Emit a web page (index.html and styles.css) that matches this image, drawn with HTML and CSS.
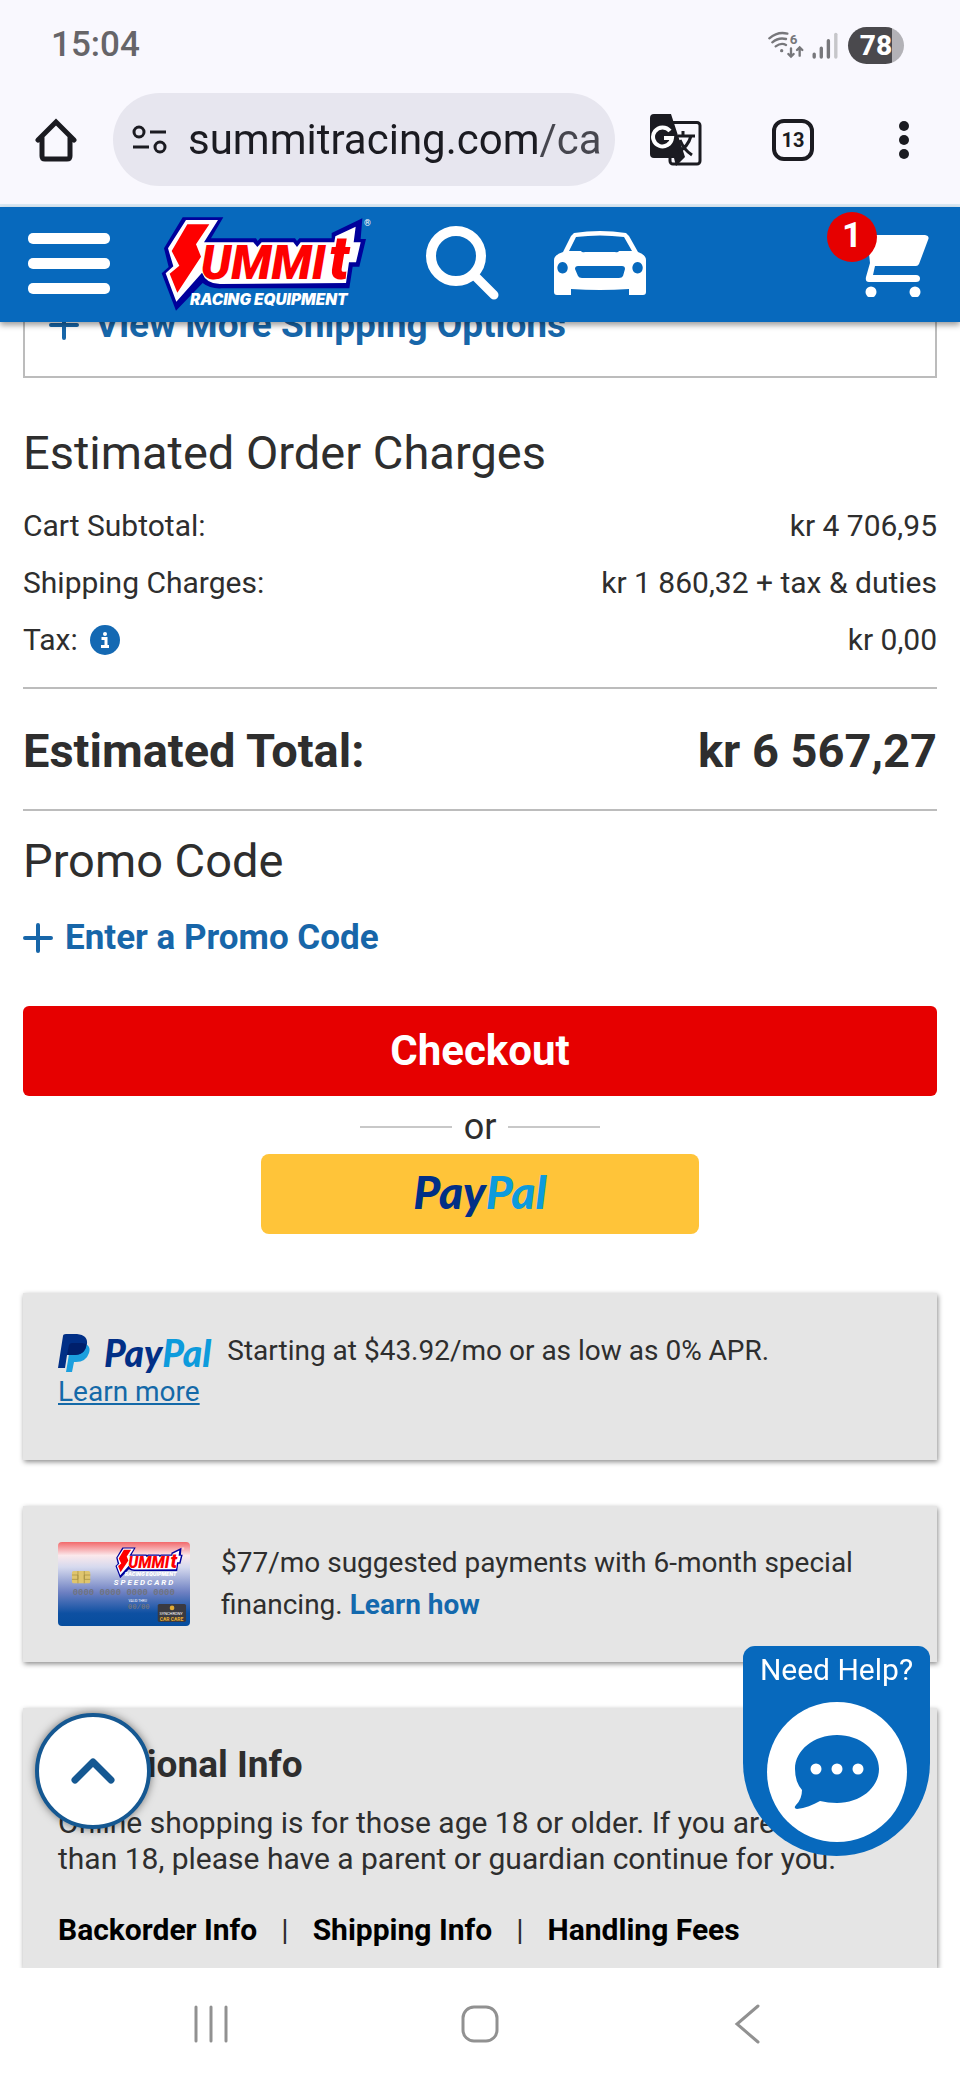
FILE: index.html
```html
<!DOCTYPE html>
<html lang="en">
<head>
<meta charset="utf-8">
<meta name="viewport" content="width=device-width, initial-scale=1">
<title>Summit Racing Equipment - Cart</title>
<link rel="stylesheet" href="styles.css">
</head>
<body>
<svg class="defs" aria-hidden="true">
  <symbol id="summit-logo" viewBox="30 30 636 291">
    <path class="logo-navy" d="M98 37H220L183 100H318L323 108 330 100H435L441 108 448 100H545V84L637 40 632 102H648L628 185H608L598 250H215Q180 252 158 234L78 317 35 205 56 186 42 130Z"/>
    <path class="logo-white" d="M108 45H204L162 112H310L322 126 335 112H430L441 126 452 112H553L556 94 617 65 611 112H632L618 172H597L588 234 210 237Q168 236 156 203L79 290 47 205 70 184 54 130Z"/>
    <path class="logo-red" d="M112 58H178L138 118 153 155 82 263 59 206 88 182 65 138Z"/>
    <text class="logo-word" x="152" y="222">UMMI<tspan class="logo-tall" x="537">t</tspan></text>
    <text class="logo-sub" x="120" y="300">RACING EQUIPMENT</text>
    <text class="logo-reg" x="642" y="62">®</text>
  </symbol>
</svg>

<div class="device-top">
  <div class="status-bar">
    <time class="clock">15:04</time>
    <div class="status-icons">
      <svg class="wifi" viewBox="0 0 108 84" aria-label="Wi-Fi 6">
        <g fill="none" stroke="#77777b" stroke-width="7" stroke-linecap="round">
          <path d="M4 22Q30 0 58 8M13 34Q32 18 54 24M23 46Q40 34 54 42"/>
          <path d="M69 52V76M61 69 69 77 77 69M95 74V50M87 57 95 49 103 57"/>
        </g>
        <circle cx="41" cy="59" r="5" fill="#77777b"/>
        <text x="65" y="38" class="wifi-gen">6</text>
      </svg>
      <svg class="signal" viewBox="0 0 76 80" aria-label="Signal">
        <path d="M6 66V74M27 48V74M48 26V74" stroke="#77777b" stroke-width="10" stroke-linecap="round"/>
        <path d="M70 7V74" stroke="#c6c6ca" stroke-width="10" stroke-linecap="round"/>
      </svg>
      <span class="battery">78</span>
    </div>
  </div>
  <div class="toolbar">
    <button class="icon-btn" type="button" aria-label="Home">
      <svg class="home" viewBox="0 0 42 44"><path d="M3 22 21 4 39 22M7 19V38Q7 41 10 41H32Q35 41 35 38V19" fill="none" stroke="#1b1b21" stroke-width="5" stroke-linecap="round" stroke-linejoin="miter"/></svg>
    </button>
    <div class="address">
      <svg class="tune" viewBox="0 0 36 30" aria-hidden="true">
        <g fill="none" stroke="#1b1b21" stroke-width="3"><circle cx="7" cy="7" r="5"/><circle cx="28" cy="22" r="5"/><path d="M18 7H34M1 22H17"/></g>
      </svg>
      <input class="url" type="text" aria-label="Address" value="summitracing.com/ca">
    </div>
    <button class="icon-btn translate-btn" type="button" aria-label="Translate">
      <svg class="translate" viewBox="0 0 52 52">
        <rect x="20" y="8.500" width="30" height="41.500" rx="3" fill="#f9f8fe" stroke="#1b1b21" stroke-width="3"/>
        <path d="M4 0H21L35 43 26 52 24 44H4Q0 44 0 40V4Q0 0 4 0Z" fill="#1b1b21"/>
        <path d="M28 22H45M33 17V22M41 22Q38 33 28 38M30 26Q34 36 42 41" fill="none" stroke="#1b1b21" stroke-width="3"/>
        <path d="M20 17A9.500 9.500 0 1 0 22 24H14" fill="none" stroke="#fff" stroke-width="4"/>
      </svg>
    </button>
    <button class="tabs" type="button" aria-label="13 open tabs">13</button>
    <button class="icon-btn dots-btn" type="button" aria-label="More">
      <svg class="dots" viewBox="0 0 10 38"><g fill="#1b1b21"><circle cx="5" cy="5" r="5"/><circle cx="5" cy="19" r="5"/><circle cx="5" cy="33" r="5"/></g></svg>
    </button>
  </div>
</div>

<header class="site-header">
  <button class="burger" type="button" aria-label="Menu"><span></span><span></span><span></span></button>
  <a class="logo-link" href="#" aria-label="Summit Racing Equipment"><svg class="logo"><use href="#summit-logo"/></svg></a>
  <button class="icon-btn search-btn" type="button" aria-label="Search">
    <svg class="search" viewBox="0 0 73 74"><ellipse cx="30" cy="30" rx="25" ry="25" fill="none" stroke="#fff" stroke-width="10"/><path d="M50 51 68 69" stroke="#fff" stroke-width="9" stroke-linecap="round"/></svg>
  </button>
  <button class="icon-btn car-btn" type="button" aria-label="Vehicle">
    <svg class="car" viewBox="0 0 92 64">
      <path fill="#fff" fill-rule="evenodd" d="M20 2Q46-2 72 2L75 5 84 21Q92 24 92 29V61Q92 64 89 64H75V58Q46 60 17 58V64H3Q0 64 0 61V29Q0 24 9 21L17 5ZM22 6 15 20H27Q28 22 31 21H61Q64 22 65 20H78L70 6Q46 3 22 6ZM24 35Q21 35 21 38L24 45Q25 47 28 47H65Q68 47 69 45L71 38Q71 35 68 35ZM8.500 31A5.200 5.800 0 1 0 8.600 31ZM83.500 31A5.200 5.800 0 1 0 83.600 31Z"/>
    </svg>
  </button>
  <a class="cart-link" href="#" aria-label="Cart, 1 item">
    <svg class="cart" viewBox="0 0 64 62"><path fill="#fff" d="M2 0H60Q65 1 63 5L54 29Q53 31 51 31H10L8 40H51Q55 40 55 43.500T51 47H4Q0 47 1 42L5 28Z"/><circle cx="6" cy="57" r="5.500" fill="#fff"/><circle cx="50" cy="57" r="5.500" fill="#fff"/></svg>
    <span class="badge">1</span>
  </a>
</header>

<main class="content">
  <section class="shipping">
    <a class="plus-link shipping-link" href="#"><svg class="plus" viewBox="0 0 30 30"><path d="M15 2V28M2 15H28" /></svg>View More Shipping Options</a>
  </section>

  <section>
    <h2 class="heading charges-heading">Estimated Order Charges</h2>
    <dl class="charges">
      <div class="row"><dt>Cart Subtotal:</dt><dd>kr 4 706,95</dd></div>
      <div class="row"><dt>Shipping Charges:</dt><dd>kr 1 860,32 + tax &amp; duties</dd></div>
      <div class="row"><dt class="tax">Tax: <button class="icon-btn" type="button" aria-label="About tax"><svg class="info" viewBox="0 0 30 30"><circle cx="15" cy="15" r="15" fill="#1469b3"/><circle cx="15" cy="9" r="2" fill="#fff"/><path d="M11.500 13.500H16V21M11 21.500H19" fill="none" stroke="#fff" stroke-width="3"/></svg></button></dt><dd>kr 0,00</dd></div>
    </dl>
    <div class="total"><span>Estimated Total:</span><span>kr 6 567,27</span></div>
  </section>

  <section>
    <h2 class="heading promo-heading">Promo Code</h2>
    <a class="plus-link promo-link" href="#"><svg class="plus" viewBox="0 0 30 30"><path d="M15 2V28M2 15H28" /></svg>Enter a Promo Code</a>
  </section>

  <section class="pay">
    <button class="checkout" type="button">Checkout</button>
    <div class="or">or</div>
    <button class="paypal-btn" type="button" aria-label="PayPal"><span class="paypal-word">Pay<span>Pal</span></span></button>
  </section>

  <section class="card paypal-card">
    <p><span class="paypal-logo"><svg class="pp" viewBox="0 0 32 38" aria-hidden="true">
      <path fill="#1b9fde" d="M28 10Q33 13 31 19 28 28 18 28H16L14 38H8L12 14Z"/>
      <path fill="#012f86" d="M5 2Q5 0 8 0H19Q30 1 29 10 27 22 15 21H9L7 34H0Z"/>
      <path fill="#001f6b" d="M28 10 28 13Q25 22 15 21H9L11 11Q12 9 14 9H24Z"/>
    </svg><span class="paypal-word small">Pay<span>Pal</span></span></span>Starting at $43.92/mo or as low as 0% APR. <a class="learn-more" href="#">Learn more</a></p>
  </section>

  <section class="card finance-card">
    <svg class="speedcard" viewBox="0 0 397 252" role="img" aria-label="Summit Racing SpeedCard">
      <defs><linearGradient id="cardfade" x1="0" y1="0" x2="0" y2="1"><stop offset="0" stop-color="#f26a6c"/><stop offset=".16" stop-color="#fbe9ec"/><stop offset=".3" stop-color="#d5d9ee"/><stop offset=".6" stop-color="#6d80c2"/><stop offset=".85" stop-color="#0d50a2"/><stop offset="1" stop-color="#064d9e"/></linearGradient></defs>
      <rect width="397" height="252" rx="12" fill="url(#cardfade)"/>
      <svg class="card-logo" x="168" y="14" width="216" height="96"><use href="#summit-logo"/></svg>
      <rect x="42" y="87" width="55" height="37" rx="5" fill="#dfc56e"/>
      <path d="M42 99H60V112H42M97 99H79V112H97M60 87V124M79 87V124" fill="none" stroke="#a08b3c" stroke-width="2"/>
      <text class="card-name" x="168" y="130">S P E E D C A R D</text>
      <text class="card-number" x="44" y="158">0000 0000 0000 0000</text>
      <text class="card-valid" x="212" y="180">VALID THRU</text>
      <text class="card-number small" x="210" y="200">00/00</text>
      <rect x="300" y="186" width="85" height="54" rx="5" fill="#3a3a40"/>
      <circle cx="343" cy="198" r="7" fill="#e0ab34"/>
      <text class="card-sync" x="305" y="220">SYNCHRONY</text>
      <text class="card-care" x="306" y="236">CAR CARE</text>
    </svg>
    <p>$77/mo suggested payments with 6-month special financing. <a class="learn-how" href="#">Learn how</a></p>
  </section>

  <section class="card info-card">
    <h3>Additional Info</h3>
    <p>Online shopping is for those age 18 or older. If you are younger than 18, please have a parent or guardian continue for you.</p>
    <nav class="info-links"><a href="#">Backorder Info</a><span>|</span><a href="#">Shipping Info</a><span>|</span><a href="#">Handling Fees</a></nav>
  </section>
</main>

<button class="to-top" type="button" aria-label="Back to top"><svg viewBox="0 0 44 26"><path d="M4 22 22 4 40 22" fill="none" stroke="#155892" stroke-width="7" stroke-linecap="round" stroke-linejoin="round"/></svg></button>

<button class="chat" type="button">
  <span>Need Help?</span>
  <svg viewBox="0 0 140 140" aria-hidden="true"><circle cx="70" cy="70" r="70" fill="#fff"/><path d="M70 33C93 33 112 48 112 67S93 101 70 101Q61 101 53 99C46 103 38 106 30 107Q26 106 29 103 35 97 35 88 28 80 28 67C28 48 47 33 70 33Z" fill="#0769bd"/><g fill="#fff"><circle cx="49" cy="67" r="5.500"/><circle cx="70" cy="67" r="5.500"/><circle cx="91" cy="67" r="5.500"/></g></svg>
</button>

<nav class="system-nav" aria-label="System navigation">
  <button class="icon-btn" type="button" aria-label="Recent apps"><svg viewBox="0 0 40 40"><path d="M4 3V37M19 3V37M34 3V37"/></svg></button>
  <button class="icon-btn" type="button" aria-label="Home screen"><svg viewBox="0 0 40 40"><rect x="3" y="3" width="34" height="34" rx="11"/></svg></button>
  <button class="icon-btn" type="button" aria-label="Back"><svg viewBox="0 0 40 40"><path d="M30 2 9 20 30 38"/></svg></button>
</nav>
</body>
</html>
```
FILE: styles.css
```css
* { box-sizing: border-box; }

body {
  margin: 0;
  min-height: 100vh;
  display: flex;
  flex-direction: column;
  background: #fff;
  color: #2e2e2e;
  font-family: Roboto, "Liberation Sans", sans-serif;
  font-size: 30px;
  line-height: 36px;
}

h2, h3, p, dl, dt, dd { margin: 0; }
button { font: inherit; color: inherit; border: 0; padding: 0; background: none; }
a { text-decoration: none; }
svg { display: block; }
.defs { position: absolute; width: 0; height: 0; }
.icon-btn { display: flex; align-items: center; justify-content: center; }

/* Phone status bar and browser toolbar */
.device-top { background: #f9f8fe; border-bottom: 3px solid #dceaf5; }
.status-bar {
  height: 90px;
  padding: 0 56px 0 51px;
  display: flex;
  align-items: center;
  justify-content: space-between;
}
.clock { font-size: 35px; font-weight: 500; color: #666569; }
.status-icons { display: flex; align-items: center; gap: 8px; }
.wifi { width: 36px; height: 28px; }
.wifi-gen { font: 700 40px Roboto, sans-serif; fill: #77777b; }
.signal { width: 26px; height: 27px; }
.battery {
  width: 56px;
  height: 37px;
  margin-left: 2px;
  border-radius: 19px;
  background: linear-gradient(to right, #4a494d 44px, #b3b2b7 44px);
  color: #fff;
  font-size: 28px;
  font-weight: 800;
  line-height: 38px;
  text-align: center;
}
.toolbar { display: flex; align-items: center; padding: 3px 51px 18px 35px; }
.home { width: 42px; height: 44px; }
.address {
  flex: 1;
  min-width: 0;
  height: 93px;
  margin-left: 36px;
  padding: 0 12px 0 19px;
  display: flex;
  align-items: center;
  gap: 20px;
  border-radius: 47px;
  background: #e7e6ef;
}
.tune { width: 36px; height: 30px; flex: none; }
.url {
  flex: 1;
  min-width: 0;
  border: 0;
  padding: 0;
  height: 60px;
  font: 42px Roboto, sans-serif;
  color: transparent;
  background: linear-gradient(to left, #46464e 63px, #1b1b21 63px);
  background-clip: text;
  -webkit-background-clip: text;
}
.translate-btn { margin-left: 35px; }
.translate { width: 52px; height: 52px; }
.tabs {
  width: 42px;
  height: 42px;
  margin-left: 70px;
  border: 4px solid #1b1b21;
  border-radius: 12px;
  color: #1b1b21;
  font-size: 20px;
  font-weight: 700;
  line-height: 34px;
}
.dots-btn { margin-left: 85px; }
.dots { width: 10px; height: 38px; }

/* Site header */
.site-header {
  position: sticky;
  top: 0;
  z-index: 2;
  height: 115px;
  padding: 0 31px 3px 28px;
  display: flex;
  align-items: center;
  background: #0769bd;
  box-shadow: 0 3px 6px rgba(0, 0, 0, .4);
}
.burger { width: 82px; display: flex; flex-direction: column; gap: 14px; }
.burger span { height: 11px; border-radius: 5px; background: #fff; }
.logo-link { margin-left: 50px; }
.logo { width: 212px; height: 97px; }
.logo-navy { fill: #00009b; }
.logo-white { fill: #fff; }
.logo-red { fill: #fe0000; }
.logo-word { font: italic 900 142px Roboto, sans-serif; fill: #fe0000; }
.logo-tall { font-size: 180px; }
.logo-sub { font: italic 900 46px Inter, sans-serif; fill: #fff; }
.logo-reg { font: 26px Roboto, sans-serif; fill: #fff; }
.search-btn { margin-left: 54px; }
.search { width: 73px; height: 74px; }
.car-btn { margin-left: 55px; }
.car { width: 92px; height: 64px; }
.cart-link { position: relative; margin: 6px 0 0 auto; }
.cart { width: 64px; height: 62px; }
.badge {
  position: absolute;
  right: 52px;
  bottom: 35px;
  width: 50px;
  height: 50px;
  border-radius: 50%;
  background: #e60000;
  color: #fff;
  font-size: 35px;
  font-weight: 700;
  line-height: 48px;
  text-align: center;
}

/* Cart summary */
.content { flex: 1; display: flex; flex-direction: column; margin-top: -17px; padding: 0 23px; }
.shipping { padding: 0 24px 31px; border: solid #bcbcbc; border-width: 0 2px 2px; }
.plus-link { display: flex; align-items: center; gap: 12px; color: #1766a9; font-size: 35px; font-weight: 700; line-height: 40px; }
.shipping-link { font-size: 37px; gap: 16px; }
.plus { width: 30px; height: 30px; }
.plus path { fill: none; stroke: #1766a9; stroke-width: 4; stroke-linecap: round; }
.heading { font-size: 47px; font-weight: 400; line-height: 56px; }
.charges-heading { margin: 47px 0 16px; }
.charges { padding-bottom: 19px; }
.row { display: flex; justify-content: space-between; line-height: 57px; }
.tax { display: flex; align-items: center; gap: 12px; }
.info { width: 30px; height: 30px; }
.total {
  display: flex;
  justify-content: space-between;
  padding: 34px 0 30px;
  border: solid #bcbcbc;
  border-width: 2px 0;
  font-size: 47px;
  font-weight: 700;
  line-height: 56px;
}
.promo-heading { margin: 22px 0 29px; }
.pay { margin-top: 48px; display: flex; flex-direction: column; align-items: center; }
.checkout { width: 100%; height: 90px; border-radius: 6px; background: #e60000; color: #fff; font-size: 42px; font-weight: 700; }
.or { display: flex; align-items: center; gap: 12px; margin: 9px 0 5px; font-size: 36px; line-height: 44px; }
.or::before, .or::after { content: ""; width: 92px; height: 2px; background: #c8c8c8; }
.paypal-btn { width: 48%; height: 80px; padding-bottom: 4px; border-radius: 8px; background: #ffc439; }
.paypal-word { font: italic 900 46px/48px Lato, sans-serif; color: #012f86; }
.paypal-word span { color: #0d9bdc; }
.paypal-word.small { font-size: 37px; line-height: 38px; }

/* Grey cards */
.card { padding: 36px 35px; background: #e5e5e5; box-shadow: 1px 2px 5px rgba(0, 0, 0, .45); }
.paypal-card { margin-top: 59px; padding-top: 38px; padding-bottom: 48px; font-size: 28px; line-height: 40px; }
.paypal-logo { display: inline-flex; align-items: center; gap: 14px; height: 38px; margin-right: 16px; vertical-align: middle; }
.pp { width: 32px; height: 38px; }
.learn-more { color: #1469a8; text-decoration: underline; white-space: nowrap; }
.finance-card { display: flex; gap: 31px; margin-top: 46px; font-size: 28px; line-height: 42px; }
.speedcard { width: 132px; height: 84px; flex: none; }
.card-logo .logo-sub { fill: #16387d; }
.card-name { font: italic 700 24px Roboto, sans-serif; fill: #fff; }
.card-number { font: 700 27px "Liberation Mono", monospace; fill: #6f7380; }
.card-number.small { font-size: 22px; }
.card-valid { font: 10px Roboto, sans-serif; fill: #fff; }
.card-sync { font: 12px Roboto, sans-serif; fill: #fff; }
.card-care { font: 700 15px Roboto, sans-serif; fill: #e8b030; }
.learn-how { color: #1469ad; font-weight: 700; }
.info-card { flex: 1; margin-top: 46px; padding-top: 35px; padding-bottom: 8px; }
.info-card h3 { font-size: 37px; font-weight: 700; line-height: 44px; margin-bottom: 18px; }
.info-card p { margin-bottom: 35px; }
.info-links { display: flex; gap: 24px; }
.info-links a { color: #000; font-weight: 700; }

/* Floating controls */
.to-top {
  position: fixed;
  z-index: 3;
  left: 35px;
  bottom: 251px;
  width: 116px;
  height: 116px;
  border: 4px solid #155892;
  border-radius: 50%;
  background: #fff;
  box-shadow: 0 0 8px rgba(0, 0, 0, .5);
  display: flex;
  align-items: center;
  justify-content: center;
}
.to-top svg { width: 44px; height: 26px; }
.chat {
  position: fixed;
  z-index: 3;
  right: 30px;
  bottom: 224px;
  width: 187px;
  height: 210px;
  padding-top: 6px;
  border-radius: 12px 12px 94px 94px;
  background: #0769bd;
  color: #fff;
  display: flex;
  flex-direction: column;
  align-items: center;
  gap: 14px;
}
.chat svg { width: 140px; height: 140px; }

.system-nav {
  position: relative;
  z-index: 1;
  height: 112px;
  padding: 0 192px;
  display: flex;
  align-items: center;
  justify-content: space-between;
  background: #fff;
}
.system-nav svg { width: 40px; height: 40px; fill: none; stroke: #919191; stroke-width: 3; stroke-linecap: round; }
```
